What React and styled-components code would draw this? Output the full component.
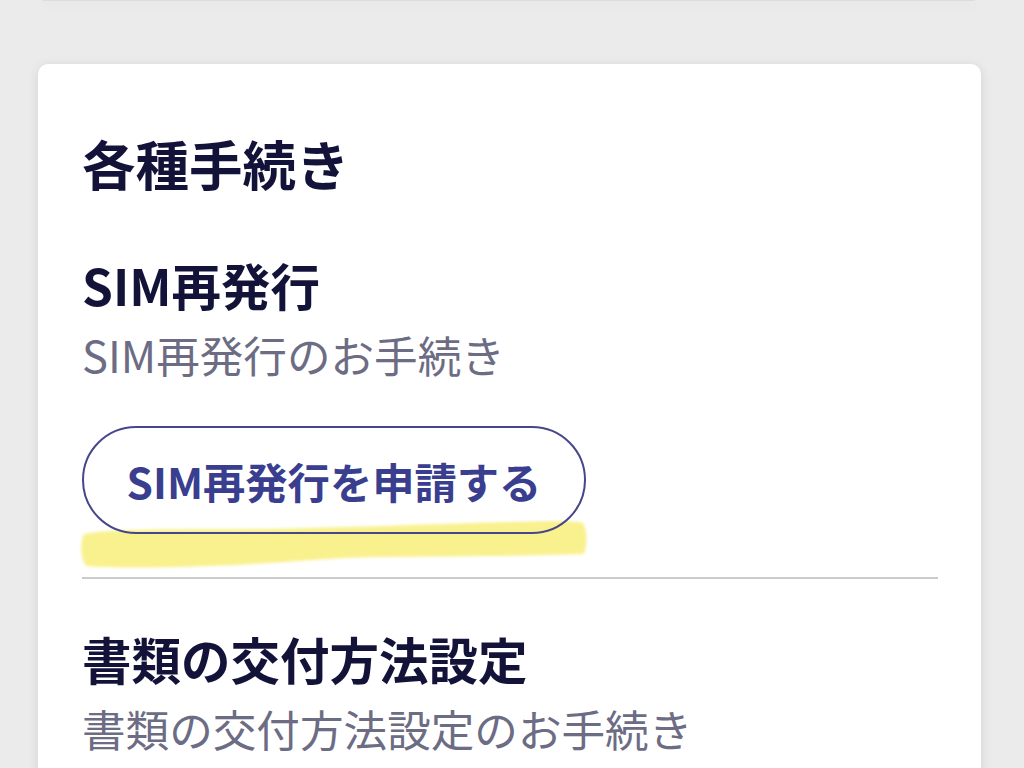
import React from "react";
import styled, { createGlobalStyle } from "styled-components";

const Global = createGlobalStyle`
  html, body { margin: 0; padding: 0; background: #ebebeb; }
  body { font-family: "Noto Sans CJK JP", "Noto Sans", sans-serif; overflow: hidden; }
`;

const Page = styled.div`
  display: flex;
  flex-direction: column;
  gap: 63px;
  padding: 0 43px 0 38px;
  height: 768px;
  box-sizing: border-box;
`;

const CardStub = styled.div`
  height: 2px;
  margin: 0 6px 0 4px;
  background: #fff;
  border-radius: 0 0 10px 10px;
  border-bottom: 1px solid #dcdcdc;
  box-shadow: 0 4px 12px rgba(0, 0, 0, 0.14);
`;

const Card = styled.section`
  background: #fff;
  border-radius: 10px;
  box-shadow: 0 2px 12px rgba(0, 0, 0, 0.1);
  padding: 65px 43px 40px 44px;
  display: flex;
  flex-direction: column;
`;

const Title = styled.h2`
  margin: 0;
  font-size: 53.5px;
  line-height: 1.28;
  font-weight: 700;
  color: #13133a;
`;

const Item = styled.div`
  display: flex;
  flex-direction: column;
  margin-top: ${(p) => p.$top}px;
`;

const Heading = styled.h3`
  margin: 0;
  font-size: 49.5px;
  line-height: 1.3;
  font-weight: 700;
  color: #13133a;
`;

const Desc = styled.p`
  margin: 8px 0 0;
  font-size: 43.6px;
  line-height: 1.3;
  font-weight: 400;
  color: #6c6c84;
`;

const ButtonWrap = styled.div`
  position: relative;
  align-self: flex-start;
  margin-top: 44px;
`;

const Highlight = styled.svg`
  position: absolute;
  left: -4px;
  top: 94px;
  width: 512px;
  height: 52px;
  z-index: 0;
  pointer-events: none;
`;

const OutlineButton = styled.button`
  position: relative;
  z-index: 1;
  display: flex;
  align-items: center;
  justify-content: center;
  width: 504px;
  height: 108px;
  box-sizing: border-box;
  border: 2px solid #45478a;
  border-radius: 54px;
  background: transparent;
  font-family: inherit;
  font-size: 42.3px;
  font-weight: 700;
  color: #3a3e8e;
  padding: 0;
`;

const Divider = styled.hr`
  margin: 43px 0 0;
  border: 0;
  height: 2px;
  background: #cbcbcf;
`;

export default function App() {
  return (
    <>
      <Global />
      <Page>
        <CardStub />
        <Card>
          <Title>各種手続き</Title>
          <Item $top={56}>
            <Heading>SIM再発行</Heading>
            <Desc>SIM再発行のお手続き</Desc>
            <ButtonWrap>
              <Highlight viewBox="0 0 512 52" aria-hidden="true">
                <defs>
                  <filter id="soft" x="-5%" y="-20%" width="110%" height="140%">
                    <feGaussianBlur stdDeviation="1.5" />
                  </filter>
                </defs>
                <path
                  d="M6 14 C 40 8, 110 10, 190 9 C 280 7, 360 4, 430 2 C 470 1, 495 0, 505 3 C 510 12, 509 26, 506 34 C 460 36, 380 36, 300 37 C 240 38, 200 44, 130 46 C 80 48, 30 48, 8 46 C 2 38, 2 22, 6 14 Z"
                  fill="#f9f18e"
                  filter="url(#soft)"
                />
              </Highlight>
              <OutlineButton type="button">SIM再発行を申請する</OutlineButton>
            </ButtonWrap>
          </Item>
          <Divider />
          <Item $top={48}>
            <Heading>書類の交付方法設定</Heading>
            <Desc>書類の交付方法設定のお手続き</Desc>
          </Item>
        </Card>
      </Page>
    </>
  );
}
